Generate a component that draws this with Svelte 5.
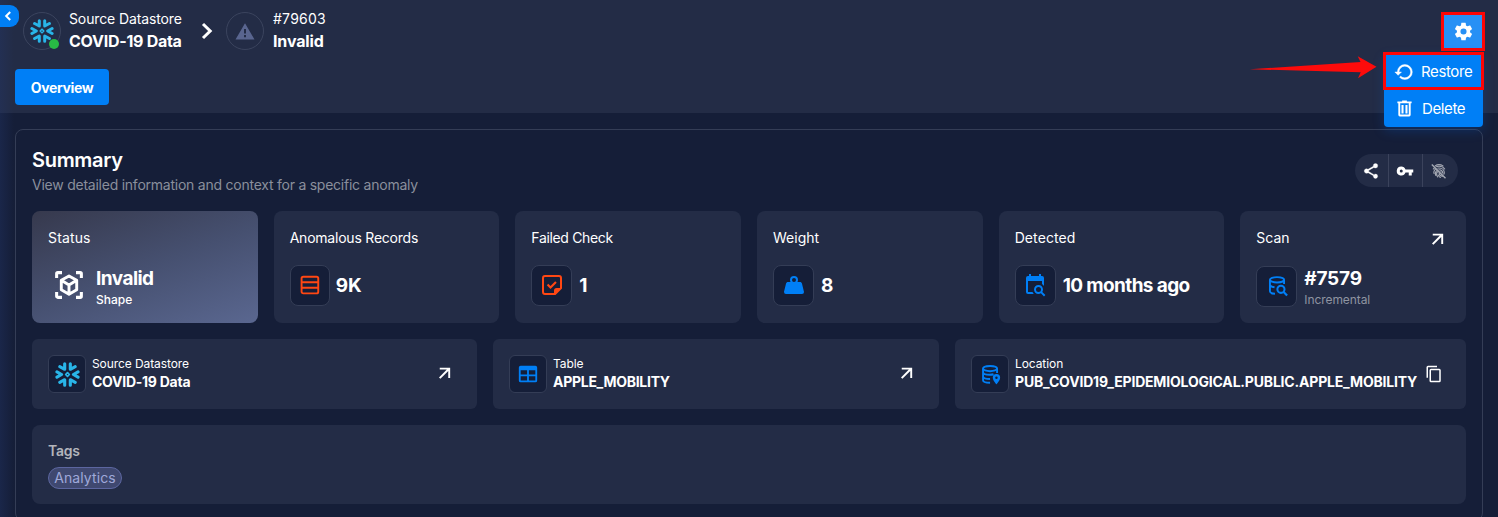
<script>
  const stats = [
    { label: 'Anomalous Records', value: '9K', icon: 'rows', tone: 'orange', cls: 'anomalous' },
    { label: 'Failed Check', value: '1', icon: 'check', tone: 'orange', cls: 'failed' },
    { label: 'Weight', value: '8', icon: 'weight', tone: 'blue', cls: 'weight' },
    { label: 'Detected', value: '10 months ago', icon: 'calendar', tone: 'blue', cls: 'detected' }
  ];
  const sources = [
    { label: 'Source Datastore', value: 'COVID-19 Data', icon: 'snow', action: 'arrow', cls: 'v-covid' },
    { label: 'Table', value: 'APPLE_MOBILITY', icon: 'table', action: 'arrow', cls: 'v-table' },
    { label: 'Location', value: 'PUB_COVID19_EPIDEMIOLOGICAL.PUBLIC.APPLE_MOBILITY', icon: 'dbpin', action: 'copy', cls: 'v-loc' }
  ];
</script>

{#snippet icon(name, size = 24)}
  <svg width={size} height={size} viewBox="0 0 24 24" fill="currentColor" aria-hidden="true">
    {#if name === 'snow'}
      <g fill="none" stroke="currentColor" stroke-width="3" stroke-linecap="round" stroke-linejoin="round">
        <path d="M9.300 1.700v5.300L4.600 4.500M14.700 1.700v5.300l4.700-2.500M9.300 22.300v-5.300l-4.700 2.500M14.700 22.300v-5.300l4.700 2.500M1.900 9.500 6.300 12l-4.400 2.500M22.100 9.500 17.700 12l4.400 2.500" />
        <path stroke-width="1.600" d="M12 10.200 13.800 12 12 13.800 10.200 12z" />
      </g>
    {:else if name === 'arrow'}
      <path d="M5.700 5.600v2.300h8.500L4.800 17.300l1.700 1.700 9.400-9.300v8.300h2.300V5.600z" />
    {:else if name === 'rows'}
      <g fill="none" stroke="currentColor" stroke-width="2.300"><rect x="1.900" y="2" width="20" height="20" rx="2" /><path d="M2 8.600h20M2 15.300h20" /></g>
    {:else if name === 'check'}
      <path fill-rule="evenodd" d="M5 2h14a3 3 0 0 1 3 3v10.500L15.500 22H5a3 3 0 0 1-3-3V5a3 3 0 0 1 3-3m0 2a1 1 0 0 0-1 1v14a1 1 0 0 0 1 1h9v-2.500a2.500 2.500 0 0 1 2.500-2.500H20V5a1 1 0 0 0-1-1zm5.500 12-3.700-3.700 1.500-1.500 2.200 2.200 4.700-4.700 1.500 1.500z" />
    {:else if name === 'weight'}
      <path d="M12 3a4 4 0 0 1 4 4c0 .730-.190 1.410-.540 2H18c.950 0 1.750.670 1.950 1.560C21.960 18.570 22 18.780 22 19a2 2 0 0 1-2 2H4a2 2 0 0 1-2-2c0-.220.040-.430 2.050-8.440C4.250 9.670 5.050 9 6 9h2.540C8.190 8.410 8 7.730 8 7a4 4 0 0 1 4-4m0 2a2 2 0 1 0 0 4 2 2 0 0 0 0-4" />
    {:else if name === 'calendar'}
      <path d="M15.500 12c2.500 0 4.500 2 4.500 4.500 0 .880-.250 1.710-.690 2.400l3.080 3.100L21 23.390l-3.120-3.070c-.690.430-1.510.680-2.380.680-2.500 0-4.500-2-4.500-4.500s2-4.500 4.500-4.500m0 2a2.500 2.500 0 1 0 0 5 2.500 2.500 0 0 0 0-5M19 8H5v11h4.500c.310.750.760 1.420 1.310 2H5a2 2 0 0 1-2-2V5a2 2 0 0 1 2-2h1V1h2v2h8V1h2v2h1a2 2 0 0 1 2 2v8.030c-.500-.800-1.190-1.490-2-2.030z" />
    {:else if name === 'dbsearch'}
      <g fill="none" stroke="currentColor" stroke-width="2.100"><ellipse cx="12" cy="5.200" rx="7.700" ry="2.900" /><path d="M4.300 5.200v12.600c0 1.500 2.500 2.500 5.500 2.700M19.700 5.200v4.500M4.300 11.200c.800 1.300 2.400 2 5 2.200" /><circle cx="16.300" cy="15.600" r="3.900" stroke-width="2.200" /><path stroke-width="2.400" d="m19 18.300 4 4" /></g>
    {:else if name === 'dbpin'}
      <g fill="none" stroke="currentColor" stroke-width="2.200"><ellipse cx="11.500" cy="5.200" rx="8" ry="3" /><path d="M3.500 5.200v13.300c0 1.600 3.200 2.900 8 3M19.500 5.200v5M3.500 9.700c.500 2 3.800 2.600 7.500 2.600 2 0 3.500-.200 4.500-.600M3.500 14.500c.500 1.600 3.500 2.600 8 2.600" /></g>
      <path fill-rule="evenodd" d="M18.800 11.500a4.200 4.200 0 0 1 4.200 4.200c0 3-4.200 7.500-4.200 7.500s-4.200-4.500-4.200-7.500a4.200 4.200 0 0 1 4.200-4.200m0 2.700a1.400 1.400 0 1 0 0 2.800 1.400 1.400 0 0 0 0-2.800" />
    {:else if name === 'table'}
      <path fill-rule="evenodd" d="M4 3h16a2 2 0 0 1 2 2v14a2 2 0 0 1-2 2H4a2 2 0 0 1-2-2V5a2 2 0 0 1 2-2m0 5v4.500h7V8zm9 0v4.500h7V8zm-9 6.500V19h7v-4.500zm9 0V19h7v-4.500z" />
    {:else if name === 'copy'}
      <path d="M19 21H8V7h11m0-2H8a2 2 0 0 0-2 2v14a2 2 0 0 0 2 2h11a2 2 0 0 0 2-2V7a2 2 0 0 0-2-2m-3-4H4a2 2 0 0 0-2 2v14h2V3h12z" />
    {:else if name === 'cube'}
      <g fill="none" stroke="currentColor" stroke-width="2.600" stroke-linejoin="round"><path d="M1.400 6V2.400a1 1 0 0 1 1-1H6M18 1.400h3.600a1 1 0 0 1 1 1V6M22.600 18v3.600a1 1 0 0 1-1 1H18M6 22.600H2.400a1 1 0 0 1-1-1V18" /><path stroke-width="2.500" d="M12 4.200 18.600 8v8L12 19.900 5.400 16V8zM5.400 8 12 12l6.600-4M12 12v8" /></g>
    {:else if name === 'gear'}
      <path d="M12 15.500A3.500 3.500 0 0 1 8.500 12 3.500 3.500 0 0 1 12 8.500a3.500 3.500 0 0 1 3.500 3.500 3.500 3.500 0 0 1-3.500 3.500m7.430-2.530c.040-.320.070-.640.070-.970s-.030-.660-.070-1l2.110-1.630c.190-.150.240-.420.120-.640l-2-3.460c-.120-.220-.390-.310-.610-.220l-2.490 1c-.520-.390-1.060-.730-1.690-.980l-.370-2.650A.506.506 0 0 0 14 2h-4c-.250 0-.460.180-.500.420l-.370 2.650c-.630.250-1.170.590-1.690.980l-2.490-1c-.220-.090-.490 0-.610.220l-2 3.460c-.130.220-.070.490.120.640L4.570 11c-.040.340-.070.670-.070 1s.030.650.070.970l-2.110 1.660c-.190.150-.250.420-.120.640l2 3.460c.120.220.390.300.610.220l2.490-1.010c.520.400 1.060.740 1.690.990l.370 2.650c.040.240.250.420.500.420h4c.250 0 .460-.180.500-.420l.370-2.650c.630-.260 1.170-.590 1.690-.990l2.490 1.010c.220.080.490 0 .610-.220l2-3.460c.120-.220.070-.490-.120-.640z" />
    {:else if name === 'restore'}
      <path d="M13 3a9 9 0 0 0-9 9H1l3.900 3.900.070.140L9 12H6a7 7 0 1 1 7 7c-1.930 0-3.680-.790-4.940-2.060l-1.420 1.420A8.950 8.950 0 0 0 13 21a9 9 0 0 0 0-18" stroke="currentColor" stroke-width=".5" />
    {:else if name === 'trash'}
      <path fill-rule="evenodd" d="M9 2h6v1h6v2.500h-1.200V20a2 2 0 0 1-2 2H6.200a2 2 0 0 1-2-2V5.500H3V3h6zM6.600 5.500v14.200h10.800V5.500zM8.200 7.500h2.600v10.700H8.200zm5 0h2.600v10.700h-2.600z" />
    {:else if name === 'share'}
      <path d="M18 16.080c-.760 0-1.440.300-1.960.770L8.910 12.700c.050-.230.090-.460.090-.700s-.040-.470-.090-.700l7.050-4.110c.540.500 1.250.810 2.040.810a3 3 0 1 0-3-3c0 .240.040.470.090.700L8.040 9.810A2.990 2.990 0 0 0 3 12a3 3 0 0 0 5.040 2.190l7.120 4.150c-.050.210-.080.430-.080.660 0 1.610 1.310 2.910 2.920 2.910s2.920-1.300 2.920-2.910A2.920 2.920 0 0 0 18 16.080" stroke="currentColor" stroke-width=".4" />
    {:else if name === 'key'}
      <path d="M7 14a2 2 0 1 1 0-4 2 2 0 0 1 0 4m5.650-4A6 6 0 0 0 7 6a6 6 0 1 0 5.650 8H17v4h4v-4h2v-4z" />
    {:else if name === 'finger'}
      <g fill="none" stroke="currentColor" stroke-width="1.700" stroke-linecap="round"><path d="M6 4.300C9.500 2 14.500 2 18 4.300M3.500 9C7 3.500 17 3.500 20.500 9M4.500 15.500C3.500 11 7 7.500 12 7.500s8 3.500 8 7.500c0 3-4 3-4.500.300C15 12.500 12.500 12 11 13M7 18.500C5.500 14 8 10.200 12 10.200s5.700 3 5.500 5M10 21c-2-3-2.500-7 .500-8.200M12.200 15c.300 3 2.500 5 5.500 4.700M14 21.700c-1.500-.700-2.500-2-3-3.500" /></g>
      <path fill="#232c46" d="m2.500 1 21 21-1 1.500L1.500 2z" />
      <path d="m.5 3 1.500-1.500L22.500 22 21 23.500z" />
    {/if}
  </svg>
{/snippet}

<div class="page">
  <header>
    <button class="collapse" aria-label="Back">
      <svg width="8" height="10" viewBox="0 0 8 10"><path d="M6.200 1 2.200 5l4 4" fill="none" stroke="#fff" stroke-width="2" /></svg>
    </button>
    <div class="crumbs">
      <div class="avatar snow">{@render icon('snow', 24)}<i></i></div>
      <div class="crumb first"><span class="c-src">Source Datastore</span><b class="c-covid">COVID-19 Data</b></div>
      <svg class="sep" width="12" height="18" viewBox="0 0 12 18"><path d="m2 2 7.200 7L2 16" fill="none" stroke="#fff" stroke-width="3" /></svg>
      <div class="avatar">
        <svg width="20" height="17" viewBox="0 0 20 17"><path fill="#59658f" fill-rule="evenodd" d="M10 .3 19.500 16.500H.5zM9 6v4.500h2V6zm0 6v2.200h2V12z" /></svg>
      </div>
      <div class="crumb anomaly"><span class="c-id">#79603</span><b class="c-inv">Invalid</b></div>
      <div class="settings">
        <button class="gear" aria-label="Settings">{@render icon('gear', 21)}</button>
        <div class="menu">
          <div class="item marked">{@render icon('restore', 20)}<span>Restore</span></div>
          <div class="item">{@render icon('trash', 19)}<span>Delete</span></div>
        </div>
        <svg class="pointer" width="128" height="24" viewBox="0 0 128 24"><path fill="#fd0b0b" d="M.7 14.300 111.500 7 108.700 1.300 127.500 11.700 109 23.300 111.700 17.300z" /></svg>
      </div>
    </div>
    <button class="tab">Overview</button>
  </header>

  <main>
    <div class="head">
      <div>
        <h1>Summary</h1>
        <p>View detailed information and context for a specific anomaly</p>
      </div>
      <div class="tools">
        <span>{@render icon('share', 18)}</span><span>{@render icon('key', 18)}</span><span class="dim">{@render icon('finger', 16)}</span>
      </div>
    </div>

    <div class="stats">
      <section class="card status">
        <h2>Status</h2>
        <div class="row">
          <div class="cube">{@render icon('cube', 28)}</div>
          <div class="stack"><b class="s-inv">Invalid</b><small>Shape</small></div>
        </div>
      </section>
      {#each stats as s}
        <section class="card {s.cls}">
          <h2>{s.label}</h2>
          <div class="row">
            <div class="box {s.tone}">{@render icon(s.icon, s.icon === 'rows' ? 20 : 24)}</div>
            <b class="big">{s.value}</b>
          </div>
        </section>
      {/each}
      <section class="card">
        <h2>Scan <span class="go">{@render icon('arrow', 20)}</span></h2>
        <div class="row scan">
          <div class="box blue">{@render icon('dbsearch', 22)}</div>
          <div class="stack"><b class="s-id">#7579</b><small class="muted">Incremental</small></div>
        </div>
      </section>
    </div>

    <div class="sources">
      {#each sources as s}
        <section class="card source">
          <div class="box small blue" class:snow={s.icon === 'snow'}>{@render icon(s.icon, s.icon === 'snow' ? 25 : s.icon === 'table' ? 22 : 21)}</div>
          <div class="meta"><span>{s.label}</span><b class={s.cls}>{s.value}</b></div>
          <span class="go {s.action}">{@render icon(s.action, s.action === 'copy' ? 18 : 20)}</span>
        </section>
      {/each}
    </div>

    <section class="card tags">
      <h3>Tags</h3>
      <span class="chip">Analytics</span>
    </section>
  </main>
</div>

<style>
  :global(body) { background: #151e38; }
  * { box-sizing: border-box; }
  .page {
    height: 517px; overflow: hidden; position: relative; color: #fff;
    font-family: Inter, 'Open Sans', sans-serif; font-size: 14px; background: #151e38;
    white-space: nowrap;
  }
  .page::after {
    content: ''; position: absolute; left: 0; top: 0; bottom: 0; width: 14px; pointer-events: none;
    background: linear-gradient(90deg, rgba(36, 56, 110, .32), transparent);
  }
  svg { display: block; flex: none; }
  button { border: 0; padding: 0; font: inherit; color: #fff; display: flex; align-items: center; justify-content: center; }
  h1, h2, h3, p { margin: 0; }
  header { height: 113px; background: #232c46; padding: 12px 15px 0; position: relative; }
  .collapse { position: absolute; z-index: 2; left: 0; top: 5px; width: 19px; height: 22px; background: #007ff6; border-radius: 0 9px 9px 0; padding-right: 3px; }
  .crumbs { height: 38px; display: flex; align-items: center; padding-left: 8px; }
  .avatar { width: 38px; height: 38px; border: 1px solid #3b445e; border-radius: 50%; display: flex; align-items: center; justify-content: center; flex: none; position: relative; }
  .snow, .box.snow { color: #29b5e8; }
  .avatar i { position: absolute; right: 1px; bottom: 0; width: 10px; height: 10px; border-radius: 50%; background: #28ba45; }
  .crumb { display: flex; flex-direction: column; margin-left: 8px; line-height: 22px; padding-bottom: 2px; }
  .crumb.anomaly { margin-left: 9px; }
  .crumb span { font-size: 14px; }
  .crumb b { font-size: 16px; font-weight: 700; }
  .first { width: 113px; }
  .c-src { letter-spacing: -.12px; }
  .c-covid { letter-spacing: -.27px; }
  .c-id { letter-spacing: .25px; }
  .c-inv { letter-spacing: -.15px; }
  .sep { margin: 0 13px 0 19px; }
  .settings { margin-left: auto; position: relative; width: 44px; height: 39px; margin-right: -2px; }
  .gear { width: 44px; height: 39px; border: 3px solid #fd0505; background: #2790f5; }
  .menu { position: absolute; z-index: 3; right: 2px; top: 41px; width: 99px; height: 74px; background: #007ff6; border-radius: 4px; box-shadow: 0 4px 12px rgba(0, 110, 240, .22); }
  .item { display: flex; align-items: center; height: 37px; padding: 1px 0 0 11px; gap: 8px; font-size: 15px; letter-spacing: -.38px; }
  .item.marked { margin: -1px -1px 0; height: 38px; padding: 2px 0 0 8px; gap: 7px; border: 3px solid #fd0505; }
  .pointer { position: absolute; right: 108px; top: 43px; }
  .tab { width: 94px; height: 36px; margin-top: 19px; background: #007ff6; border-radius: 4px; font-weight: 700; font-size: 14px; letter-spacing: -.38px; }

  main { margin: 16px 15px 0; height: 392px; border: 1px solid #343d56; border-radius: 8px; padding: 0 16px; }
  .head { display: flex; justify-content: space-between; height: 81px; padding-top: 17px; }
  h1 { font-size: 20px; line-height: 26px; font-weight: 600; letter-spacing: -.3px; }
  p { color: #8a8f9c; line-height: 24px; letter-spacing: -.24px; }
  .tools { display: flex; width: 103px; height: 33px; margin: 7px 8px 0 0; border-radius: 17px; background: #232c46; overflow: hidden; }
  .tools span { width: 34px; display: flex; align-items: center; justify-content: center; border-right: 1px solid #3b435c; padding-right: 1px; }
  .tools span:last-child { border: 0; padding-right: 2px; }
  .dim { color: #a5a9b4; }
  .card { background: #232c46; border-radius: 8px; }
  .stats { display: grid; grid-template-columns: repeat(6, 1fr); gap: 16px; height: 112px; }
  .stats .card { padding: 16px 16px 0; }
  .stats .status { background: linear-gradient(160deg, #36394d 0%, #465070 50%, #5a6790 100%); }
  h2 { font-size: 14px; font-weight: 400; line-height: 22px; display: flex; justify-content: space-between; align-items: center; }
  .status h2 { letter-spacing: .15px; }
  .anomalous h2 { letter-spacing: -.22px; }
  .failed h2 { letter-spacing: -.34px; }
  .detected h2 { letter-spacing: .1px; }
  .go { margin-right: 3px; }
  h2 .go { margin: 2px 2px 0 0; }
  .row { display: flex; align-items: center; margin-top: 15px; height: 42px; }
  .row.scan { margin-top: 16px; }
  .box { width: 41px; height: 41px; border: 1px solid #343d56; border-radius: 8px; background: #151e38; display: flex; align-items: center; justify-content: center; flex: none; margin-right: 7px; }
  .anomalous .box { width: 40px; margin-right: 6px; }
  .orange { color: #ff4713; }
  .blue { color: #007ff6; }
  .big { font-size: 19px; font-weight: 700; }
  .detected .big { letter-spacing: -.62px; }
  .cube { width: 42px; display: flex; justify-content: center; margin-right: 6px; }
  .stack { display: flex; flex-direction: column; line-height: 21px; padding-top: 8px; }
  .scan .stack { padding-top: 6px; }
  .stack b { font-size: 19px; font-weight: 700; }
  .s-inv { letter-spacing: -.55px; }
  .s-id { letter-spacing: -.2px; }
  .stack small { font-size: 12px; font-weight: 500; }
  .stack .muted { color: #8f94a1; font-weight: 400; letter-spacing: -.08px; }
  .sources { display: grid; grid-template-columns: 445px 446px 511px; gap: 16px; margin-top: 16px; height: 70px; }
  .source { display: flex; align-items: center; padding: 0 16px; border-radius: 6px; }
  .small { width: 38px; height: 38px; border-radius: 6px; margin-right: 6px; }
  .meta { display: flex; flex-direction: column; line-height: 18px; padding-bottom: 2px; }
  .meta span { font-size: 12px; letter-spacing: -.08px; }
  .meta b { font-size: 14px; font-weight: 700; }
  .v-covid { letter-spacing: -.26px; }
  .v-table { letter-spacing: -.28px; }
  .v-loc { letter-spacing: -.185px; }
  .source .go { margin: 0 6px 2px auto; }
  .source .go.copy { margin: 0 7px 1px auto; }
  .tags { margin-top: 16px; height: 79px; padding: 16px; }
  h3 { font-size: 14px; line-height: 20px; font-weight: 600; color: #b3b5bb; letter-spacing: -.25px; }
  .chip { display: inline-flex; align-items: center; justify-content: center; width: 74px; height: 22px; margin-top: 6px; padding-bottom: 2px; border: 1px solid #5c66a0; border-radius: 11px; background: #3f4870; color: #9fa8da; font-size: 14px; letter-spacing: .1px; }
</style>
